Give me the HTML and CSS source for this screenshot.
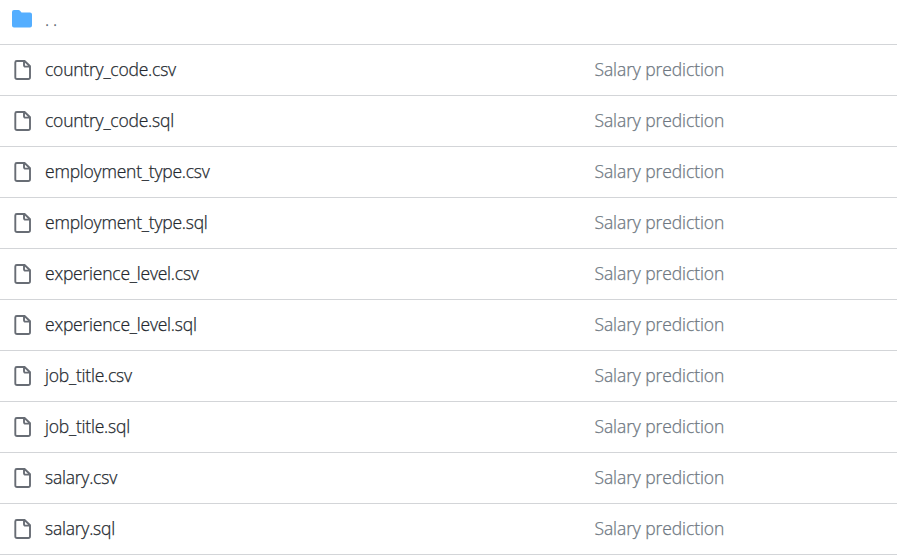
FILE: index.html
```html
<!DOCTYPE html>
<html lang="en">
<head>
<meta charset="utf-8">
<title>Files</title>
<link rel="stylesheet" href="styles.css">
</head>
<body>
<svg class="defs" aria-hidden="true">
<symbol id="file" viewBox="0 0 20 20"><path d="M4.8 1H12.6L18 6.2V17.2A1.8 1.8 0 0 1 16.2 19H5.1A1.8 1.8 0 0 1 3.3 17.2V2.5A1.5 1.5 0 0 1 4.8 1ZM12 1V5.3A1.3 1.3 0 0 0 13.3 6.6H18"/></symbol>
</svg>
<main class="files">
<div class="row parent"><svg class="icon folder" viewBox="0 0 20 20"><path d="M2 1A2 2 0 0 0 0 3V16.5A2 2 0 0 0 2 18.5H18A2 2 0 0 0 20 16.5V5.5A2 2 0 0 0 18 3.5H9.5L8 1.8A2 2 0 0 0 6.5 1Z"/></svg><a class="name up">. .</a></div>
<div class="row"><svg class="icon"><use href="#file"/></svg><a class="name">country_code.csv</a><span class="message">Salary prediction</span></div>
<div class="row"><svg class="icon"><use href="#file"/></svg><a class="name">country_code.sql</a><span class="message">Salary prediction</span></div>
<div class="row"><svg class="icon"><use href="#file"/></svg><a class="name">employment_type.csv</a><span class="message">Salary prediction</span></div>
<div class="row"><svg class="icon"><use href="#file"/></svg><a class="name">employment_type.sql</a><span class="message">Salary prediction</span></div>
<div class="row"><svg class="icon"><use href="#file"/></svg><a class="name">experience_level.csv</a><span class="message">Salary prediction</span></div>
<div class="row"><svg class="icon"><use href="#file"/></svg><a class="name">experience_level.sql</a><span class="message">Salary prediction</span></div>
<div class="row"><svg class="icon"><use href="#file"/></svg><a class="name">job_title.csv</a><span class="message">Salary prediction</span></div>
<div class="row"><svg class="icon"><use href="#file"/></svg><a class="name">job_title.sql</a><span class="message">Salary prediction</span></div>
<div class="row"><svg class="icon"><use href="#file"/></svg><a class="name">salary.csv</a><span class="message">Salary prediction</span></div>
<div class="row"><svg class="icon"><use href="#file"/></svg><a class="name">salary.sql</a><span class="message">Salary prediction</span></div>
</main>
</body>
</html>
```

FILE: styles.css
```css
body {
  margin: 0;
  background: #fff;
  font: 300 17.5px/24px "Segoe UI", "Open Sans", sans-serif;
  letter-spacing: -0.22px;
  color: #24292f;
  -webkit-text-stroke: 0.25px currentColor;
}
.defs { display: none; }
.row {
  display: grid;
  grid-template-columns: 33px 549.5px 1fr;
  align-items: center;
  box-sizing: border-box;
  height: 51px;
  padding-left: 12px;
  border-bottom: 1px solid #d3d5d8;
}
.parent { height: 45px; padding-bottom: 6px; }
.icon { width: 20px; height: 20px; fill: none; stroke: #686d75; stroke-width: 1.9; }
.folder { fill: #54aeff; stroke: none; }
.name, .message { padding-bottom: 2px; }
.up { padding-bottom: 0; letter-spacing: -0.4px; color: #57606a; }
.message { color: #6e7781; letter-spacing: -0.1px; }
```
